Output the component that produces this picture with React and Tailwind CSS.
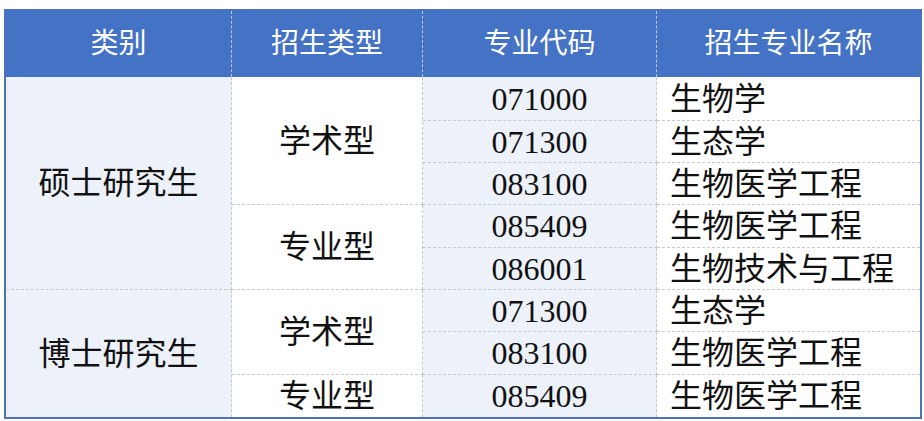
import React from "react";

const font = { fontFamily: '"Liberation Serif", "Noto Sans CJK SC", serif' };

const rows = [
  ["071000", "生物学"],
  ["071300", "生态学"],
  ["083100", "生物医学工程"],
  ["085409", "生物医学工程"],
  ["086001", "生物技术与工程"],
  ["071300", "生态学"],
  ["083100", "生物医学工程"],
  ["085409", "生物医学工程"],
];

const rowStart = [
  "row-start-2",
  "row-start-3",
  "row-start-4",
  "row-start-5",
  "row-start-6",
  "row-start-7",
  "row-start-8",
  "row-start-9",
];

export default function App() {
  const dash = "border-dashed border-[#c9c9c9]";
  return (
    <div className="w-[924px] h-[421px] bg-white pt-[9px] pl-[4px]" style={font}>
      <div className="w-[918px] border-2 border-[#4a72bd]">
        <div className="grid grid-cols-[226px_191px_234px_263px] grid-rows-[66px_44px_42px_42px_43px_42px_42px_43px_42px] text-[#111]">
          {/* header */}
          {["类别", "招生类型", "专业代码", "招生专业名称"].map((h, i) => (
            <div
              key={h}
              className={`row-start-1 bg-[#4472c4] text-white text-[28px] flex items-center justify-center ${
                i < 3 ? "border-r border-dashed border-[#b9c9e8]" : ""
              }`}
            >
              {h}
            </div>
          ))}

          {/* col 1 */}
          <div className={`col-start-1 row-start-2 row-span-5 bg-[#edf1f9] border-r border-b ${dash} flex items-center justify-center text-[32px]`}>
            硕士研究生
          </div>
          <div className={`col-start-1 row-start-7 row-span-3 bg-[#edf1f9] border-r ${dash} flex items-center justify-center text-[32px]`}>
            博士研究生
          </div>

          {/* col 2 */}
          <div className={`col-start-2 row-start-2 row-span-3 bg-white border-r border-b ${dash} flex items-center justify-center text-[32px]`}>
            学术型
          </div>
          <div className={`col-start-2 row-start-5 row-span-2 bg-white border-r border-b ${dash} flex items-center justify-center text-[32px]`}>
            专业型
          </div>
          <div className={`col-start-2 row-start-7 row-span-2 bg-white border-r border-b ${dash} flex items-center justify-center text-[32px]`}>
            学术型
          </div>
          <div className={`col-start-2 row-start-9 bg-white border-r ${dash} flex items-center justify-center text-[32px]`}>
            专业型
          </div>

          {/* col 3 & 4 */}
          {rows.map(([code, name], i) => (
            <React.Fragment key={i}>
              <div
                className={`col-start-3 ${rowStart[i]} bg-[#edf1f9] border-r ${i < 7 ? "border-b" : ""} ${dash} flex items-center justify-center text-[32px]`}
              >
                {code}
              </div>
              <div
                className={`col-start-4 ${rowStart[i]} bg-white ${i < 7 ? "border-b" : ""} ${dash} flex items-center pl-[13px] text-[32px]`}
              >
                {name}
              </div>
            </React.Fragment>
          ))}
        </div>
      </div>
    </div>
  );
}
